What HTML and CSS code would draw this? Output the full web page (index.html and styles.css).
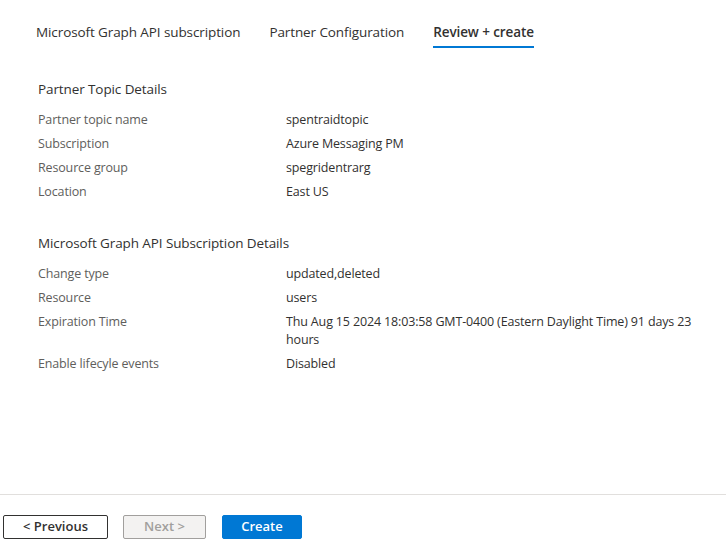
FILE: index.html
```html
<!DOCTYPE html>
<html lang="en">
<head>
<meta charset="utf-8">
<title>Review + create</title>
<link rel="stylesheet" href="styles.css">
</head>
<body>
<div class="page">
  <nav class="tabs">
    <div class="tab">Microsoft Graph API subscription</div>
    <div class="tab">Partner Configuration</div>
    <div class="tab active">Review + create</div>
  </nav>
  <main class="content">
    <section class="section">
      <h2 class="heading">Partner Topic Details</h2>
      <div class="rows">
        <div class="row"><div class="label">Partner topic name</div><div class="value">spentraidtopic</div></div>
        <div class="row"><div class="label">Subscription</div><div class="value">Azure Messaging PM</div></div>
        <div class="row"><div class="label">Resource group</div><div class="value">spegridentrarg</div></div>
        <div class="row"><div class="label">Location</div><div class="value">East US</div></div>
      </div>
    </section>
    <section class="section second">
      <h2 class="heading">Microsoft Graph API Subscription Details</h2>
      <div class="rows">
        <div class="row"><div class="label">Change type</div><div class="value">updated,deleted</div></div>
        <div class="row"><div class="label">Resource</div><div class="value">users</div></div>
        <div class="row"><div class="label">Expiration Time</div><div class="value">Thu Aug 15 2024 18:03:58 GMT-0400 (Eastern Daylight Time) 91 days 23 hours</div></div>
        <div class="row"><div class="label">Enable lifecyle events</div><div class="value">Disabled</div></div>
      </div>
    </section>
  </main>
  <footer class="footer">
    <button class="btn btn-prev">&lt; Previous</button>
    <button class="btn btn-next" disabled>Next &gt;</button>
    <button class="btn btn-create">Create</button>
  </footer>
</div>
</body>
</html>
```

FILE: styles.css
```css
html, body {
  margin: 0;
  padding: 0;
  background: #ffffff;
}
body {
  font-family: "Open Sans", "Noto Sans", sans-serif;
  color: #323130;
}
.page {
  height: 558px;
  display: flex;
  flex-direction: column;
}
.tabs {
  display: flex;
  gap: 29px;
  padding: 22px 0 0 36px;
}
.tab {
  font-size: 13.5px;
  line-height: 20px;
  padding-bottom: 4px;
  border-bottom: 2px solid transparent;
  color: #323130;
  letter-spacing: -0.1px;
}
.tab.active {
  font-weight: 600;
  border-bottom-color: #0078d4;
}
.content {
  flex: 1;
  padding: 31px 0 0 38px;
}
.section.second {
  margin-top: 32px;
}
.heading {
  margin: 0 0 12px 0;
  font-size: 13.5px;
  line-height: 20px;
  font-weight: 400;
  color: #323130;
  letter-spacing: -0.1px;
}
.rows {
  display: flex;
  flex-direction: column;
  gap: 6px;
}
.row {
  display: flex;
  font-size: 12.5px;
  line-height: 18px;
  letter-spacing: -0.15px;
}
.label {
  width: 248px;
  flex: none;
  color: #605e5c;
}
.value {
  width: 425px;
  color: #323130;
}
.footer {
  border-top: 1px solid #e1dfdd;
  display: flex;
  gap: 15px;
  padding: 20px 0 19px 3px;
}
.btn {
  font-family: inherit;
  font-size: 13px;
  font-weight: 600;
  height: 24px;
  padding: 0 0 2px 0;
  border-radius: 2px;
  box-sizing: border-box;
  line-height: 20px;
  cursor: pointer;
}
.btn-prev {
  width: 105px;
  background: #ffffff;
  border: 1px solid #323130;
  color: #323130;
}
.btn-next {
  width: 83px;
  background: #f3f2f1;
  border: 1px solid #a19f9d;
  color: #a19f9d;
  cursor: default;
}
.btn-create {
  width: 80px;
  background: #0078d4;
  border: 1px solid #0078d4;
  color: #ffffff;
  margin-left: 1px;
}
```
